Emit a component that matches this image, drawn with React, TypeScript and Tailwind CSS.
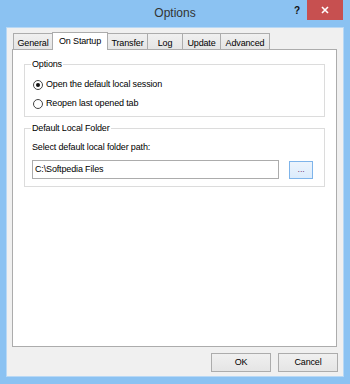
import React, { useState } from 'react';

const tabs = [
  { label: 'General', w: 'w-[40px]' },
  { label: 'On Startup', w: 'w-[56px]' },
  { label: 'Transfer', w: 'w-[41px]' },
  { label: 'Log', w: 'w-[36px]' },
  { label: 'Update', w: 'w-[39px]' },
  { label: 'Advanced', w: 'w-[50px]' },
];

function Radio({ checked, label, onClick }: { checked: boolean; label: string; onClick: () => void }) {
  return (
    <button onClick={onClick} className="flex items-center gap-[3px] h-[14px] text-left">
      <span className="w-[10px] h-[10px] rounded-full border border-[#444] bg-white flex items-center justify-center">
        {checked && <span className="w-[4px] h-[4px] rounded-full bg-[#111]" />}
      </span>
      <span>{label}</span>
    </button>
  );
}

function GroupBox({ title, className, children }: { title: string; className: string; children: React.ReactNode }) {
  return (
    <div className={`relative border border-[#dcdcdc] ${className}`}>
      {/* caption sits over the top line */}
      <span className="absolute -top-[7px] left-[6px] bg-white px-[1px] leading-[12px]">{title}</span>
      {children}
    </div>
  );
}

export default function App() {
  const [active, setActive] = useState(1);
  const [startup, setStartup] = useState(0);

  return (
    <div
      className="w-[350px] h-[384px] bg-[#8bc2f2] flex flex-col text-[9px] tracking-[-0.15px] text-black select-none"
      style={{ fontFamily: '"Liberation Sans", Arial, sans-serif' }}
    >
      {/* Title bar */}
      <div className="relative h-[27px] flex items-center justify-center">
        <span className="text-[12px] tracking-normal text-[#333] -mt-[2px]">Options</span>
        <div className="absolute right-[7px] top-0 flex items-start">
          <span className="w-[20px] h-[20px] flex items-center justify-center text-[10px] font-bold text-[#111]">?</span>
          <span className="w-[36px] h-[20px] bg-[#c75050] flex items-center justify-center">
            <svg width="8" height="8" viewBox="0 0 8 8">
              <path d="M1 1L7 7M7 1L1 7" stroke="#fff" strokeWidth="1.6" />
            </svg>
          </span>
        </div>
      </div>

      {/* Client area */}
      <div className="flex-1 mx-[6px] mb-[7px] border border-[#b8d8f5]">
        <div className="h-full bg-[#f0f0f0] flex flex-col pl-[5px] pr-[6px] pt-[4px]">
          {/* Tabs */}
          <div className="flex items-end h-[17px] pl-[1px] relative z-10">
            {tabs.map((t, i) => {
              const sel = i === active;
              return (
                <button
                  key={t.label}
                  onClick={() => setActive(i)}
                  className={`${t.w} ${i > 0 ? '-ml-px' : ''} border-t border-l border-r border-[#acacac] flex items-start justify-center ${
                    sel
                      ? 'h-[18px] -mb-px bg-white pt-[3px] relative z-10'
                      : 'h-[16px] bg-gradient-to-b from-[#f0f0f0] to-[#e5e5e5] pt-[4px]'
                  }`}
                >
                  <span className="leading-[10px] whitespace-nowrap">{t.label}</span>
                </button>
              );
            })}
          </div>

          {/* Panel */}
          <div className="h-[298px] bg-white border border-[#acacac] flex flex-col px-[11px] pt-[14px]">
            <GroupBox title="Options" className="h-[53px] flex flex-col pl-[8px] pt-[13px] gap-[5px]">
              <Radio checked={startup === 0} label="Open the default local session" onClick={() => setStartup(0)} />
              <Radio checked={startup === 1} label="Reopen last opened tab" onClick={() => setStartup(1)} />
            </GroupBox>

            <GroupBox title="Default Local Folder" className="mt-[11px] h-[59px] flex flex-col pl-[7px] pr-[11px] pt-[12px]">
              <span className="leading-[12px]">Select default local folder path:</span>
              <div className="mt-[7px] flex items-center">
                <div className="w-[249px] h-[19px] border border-[#acacac] bg-white flex items-center pl-[2px]">
                  C:\Softpedia Files
                </div>
                <button className="ml-[10px] w-[24px] h-[18px] border border-[#7eb4ea] bg-gradient-to-b from-[#ecf4fc] to-[#dcecfc] flex items-center justify-center text-[#7a3e7a] leading-none">
                  ...
                </button>
              </div>
            </GroupBox>
          </div>

          {/* Buttons */}
          <div className="flex justify-end gap-[7px] mt-[6px] -mr-px">
            <button className="w-[60px] h-[19px] border border-[#acacac] bg-gradient-to-b from-[#f0f0f0] to-[#e5e5e5] flex items-center justify-center">
              OK
            </button>
            <button className="w-[60px] h-[19px] border border-[#acacac] bg-gradient-to-b from-[#f0f0f0] to-[#e5e5e5] flex items-center justify-center">
              Cancel
            </button>
          </div>
        </div>
      </div>
    </div>
  );
}
